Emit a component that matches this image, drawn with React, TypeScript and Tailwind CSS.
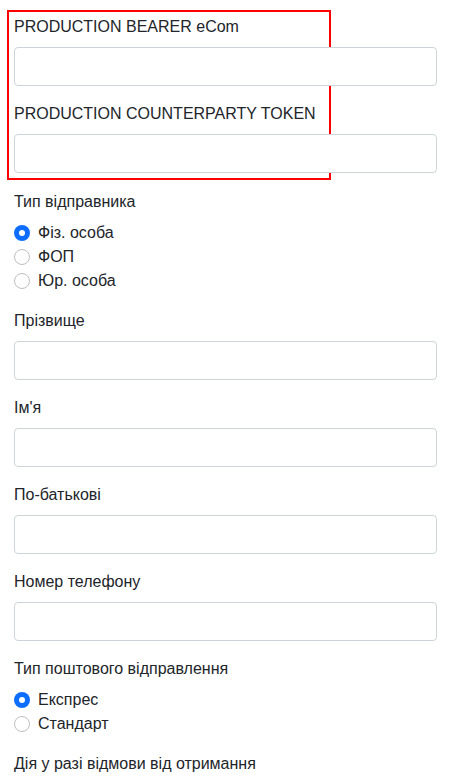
import { useState } from "react";

const Field = ({ label, last }: { label: string; last?: boolean }) => (
    <div className={last ? "" : "mb-4"}>
        <label className="block h-6 leading-6 mb-2 whitespace-nowrap">{label}</label>
        <input
            type="text"
            className="block w-[423px] h-[39px] px-3 bg-white border border-[#ced4da] rounded-[4px] outline-none"
        />
    </div>
)

const RadioGroup = ({ label, options, className }: { label: string; options: string[]; className?: string }) => {
    const [value, setValue] = useState(0);
    return (
        <div className={className}>
            <div className="h-6 leading-6 mb-[7px]">{label}</div>
            {options.map((opt, i) => (
                <label key={opt} className="flex h-6 leading-6 items-start gap-2 cursor-pointer" onClick={() => setValue(i)}>
                    {value === i ? (
                        <span className="mt-1 w-4 h-4 rounded-full bg-[#0d6efd] flex items-center justify-center shrink-0">
                            <span className="w-[6px] h-[6px] rounded-full bg-white" />
                        </span>
                    ) : (
                        <span className="mt-1 w-4 h-4 rounded-full bg-white border border-[#bfbfbf] shrink-0" />
                    )}
                    <span>{opt}</span>
                </label>
            ))}
        </div>
    )
}

export default function App() {
    return (
        <div className="min-h-[783px] bg-white text-[#212529] text-base pl-[14px] pr-[13px] font-['Liberation_Sans',Arial,sans-serif]">
            <div className="pt-[10px]">
                <div className="-ml-[7px] w-[324px] border-2 border-[#f00] pl-[5px] pt-[3px] pb-[5px]">
                    <Field label="PRODUCTION BEARER eCom" />
                    <Field label="PRODUCTION COUNTERPARTY TOKEN" last />
                </div>
            </div>

            <RadioGroup className="mt-[10px] mb-4" label="Тип відправника" options={["Фіз. особа", "ФОП", "Юр. особа"]} />

            <Field label="Прізвище" />
            <Field label="Ім'я" />
            <Field label="По-батькові" />
            <Field label="Номер телефону" />

            <RadioGroup className="mb-4" label="Тип поштового відправлення" options={["Експрес", "Стандарт"]} />

            <Field label="Дія у разі відмови від отримання" />
        </div>
    )
}
